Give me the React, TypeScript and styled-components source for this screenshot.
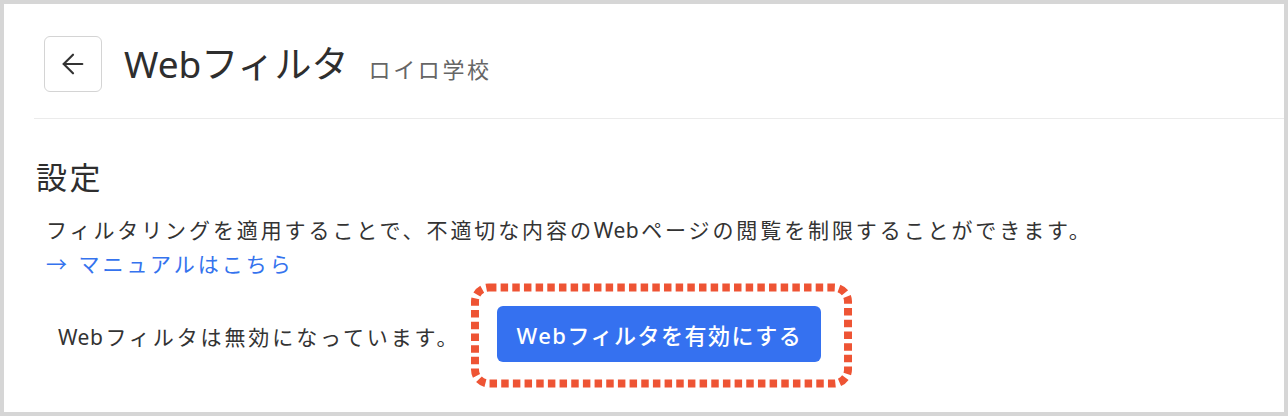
import React from 'react';
import styled, { createGlobalStyle } from 'styled-components';
import { ArrowLeft } from 'lucide-react';

const GlobalStyle = createGlobalStyle`
  html, body {
    margin: 0;
    padding: 0;
    background: #ffffff;
  }
  body {
    font-family: "Noto Sans", "Noto Sans CJK JP", sans-serif;
    color: #333333;
  }
`;

const Frame = styled.div`
  box-sizing: border-box;
  width: 1288px;
  height: 416px;
  border: 4px solid #d6d6d6;
  background: #ffffff;
  overflow: hidden;
`;

const Header = styled.header`
  display: flex;
  align-items: center;
  margin-left: 30px;
  padding: 32px 0 26px 10px;
  border-bottom: 1px solid #ebebeb;
`;

const BackButton = styled.button`
  box-sizing: border-box;
  width: 58px;
  height: 56px;
  display: flex;
  align-items: center;
  justify-content: center;
  background: #ffffff;
  border: 1px solid #d4d4d4;
  border-radius: 6px;
  color: #333333;
  padding: 0;
  cursor: pointer;
`;

const Title = styled.h1`
  margin: 0 0 0 22px;
  font-size: 37px;
  font-weight: 400;
  line-height: 46px;
  color: #2e2e2e;
`;

const SubTitle = styled.span`
  margin: 8px 0 0 20px;
  font-size: 22px;
  letter-spacing: 0.12em;
  color: #666666;
`;

const Section = styled.section`
  padding: 38px 0 0 32px;
`;

const Heading = styled.h2`
  margin: 0 0 16px;
  font-size: 31px;
  font-weight: 400;
  line-height: 40px;
  letter-spacing: 0.08em;
  color: #2e2e2e;
`;

const Description = styled.p`
  margin: 0 0 0 10px;
  font-size: 21px;
  line-height: 34px;
  letter-spacing: 2.9px;
`;

const Latin = styled.span`
  letter-spacing: 0.5px;
  margin-right: 2px;
`;

const ManualLink = styled.a`
  display: block;
  margin-left: 10px;
  font-size: 21px;
  line-height: 34px;
  letter-spacing: 3px;
  color: #3573ee;
  text-decoration: none;
`;

const StatusRow = styled.div`
  display: flex;
  align-items: center;
  margin-top: 2px;
  padding-left: 22px;
`;

const StatusText = styled.span`
  font-size: 21px;
  letter-spacing: 2.9px;
  margin-right: 11px;
`;

const Highlight = styled.div`
  position: relative;
  padding: 23px 31px 26px 26px;
`;

const Marker = styled.svg`
  position: absolute;
  inset: 0;
  width: 100%;
  height: 100%;
  pointer-events: none;
`;

const PrimaryButton = styled.button`
  box-sizing: border-box;
  width: 324px;
  height: 56px;
  border: none;
  border-radius: 6px;
  background: #3571f0;
  color: #ffffff;
  font-family: "Noto Sans", "Noto Sans CJK JP", sans-serif;
  font-size: 22px;
  font-weight: 500;
  letter-spacing: 1.5px;
  cursor: pointer;
`;

export default function App() {
  return (
    <>
      <GlobalStyle />
      <Frame>
        <Header>
          <BackButton aria-label="戻る">
            <ArrowLeft size={32} strokeWidth={1.6} />
          </BackButton>
          <Title>Webフィルタ</Title>
          <SubTitle>ロイロ学校</SubTitle>
        </Header>
        <Section>
          <Heading>設定</Heading>
          <Description>
            フィルタリングを適用することで、不適切な内容の<Latin>Web</Latin>ページの閲覧を制限することができます。
          </Description>
          <ManualLink href="#">→ マニュアルはこちら</ManualLink>
          <StatusRow>
            <StatusText>
              <Latin>Web</Latin>フィルタは無効になっています。
            </StatusText>
            <Highlight>
              <Marker viewBox="0 0 382 105" preserveAspectRatio="none">
                <rect
                  x="4"
                  y="4.5"
                  width="374"
                  height="96"
                  rx="14"
                  fill="none"
                  stroke="#ee5434"
                  strokeWidth="8"
                  strokeDasharray="7.5 4.2"
                />
              </Marker>
              <PrimaryButton>Webフィルタを有効にする</PrimaryButton>
            </Highlight>
          </StatusRow>
        </Section>
      </Frame>
    </>
  );
}
